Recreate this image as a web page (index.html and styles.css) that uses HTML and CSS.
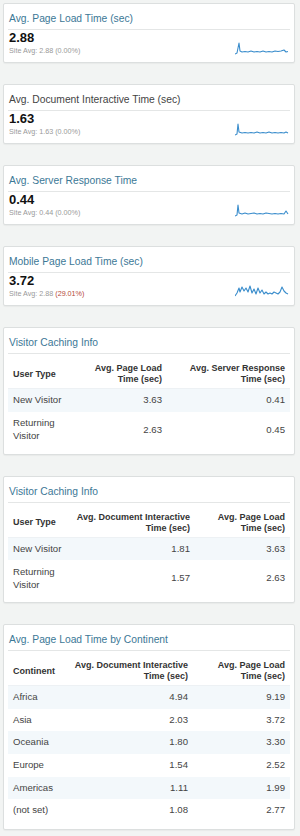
FILE: index.html
```html
<!doctype html>
<html>
<head>
    <meta charset="UTF-8">
    <title>Site Speed</title>
    <link rel="stylesheet" href="styles.css">
</head>
<body>
<div class="page">
    <div class="card small">
        <div class="title">Avg. Page Load Time (sec)</div>
        <div class="metric">
            <div>
                <div class="value">2.88</div>
                <div class="siteAvg">Site Avg: 2.88 (0.00%)</div>
            </div>
            <svg class="spark" viewBox="0 0 54 14" width="54" height="14">
                <polyline points="0,13 2,12 4,2 5,10 7,11 10,10.5 13,11 16,10 19,11 22,10.5 25,11 28,10 31,11 34,10.5 37,11 40,10 43,10.5 46,10 49,9 51,11 53,10.5"/>
            </svg>
        </div>
    </div>

    <div class="card small">
        <div class="title dark">Avg. Document Interactive Time (sec)</div>
        <div class="metric">
            <div>
                <div class="value">1.63</div>
                <div class="siteAvg">Site Avg: 1.63 (0.00%)</div>
            </div>
            <svg class="spark" viewBox="0 0 54 14" width="54" height="14">
                <polyline points="0,13 2,12 3,2 4,10 7,11 10,10.5 13,11 16,10.5 19,11 22,10 25,11 28,10.5 31,11 34,10 37,11 40,10.5 43,11 46,10.5 49,11 51,10 53,11"/>
            </svg>
        </div>
    </div>

    <div class="card small">
        <div class="title">Avg. Server Response Time</div>
        <div class="metric">
            <div>
                <div class="value">0.44</div>
                <div class="siteAvg">Site Avg: 0.44 (0.00%)</div>
            </div>
            <svg class="spark" viewBox="0 0 54 14" width="54" height="14">
                <polyline points="0,13 2,12 3,2 4,10 7,11 10,10 13,11 16,10.5 19,10 22,11 25,10.5 28,11 31,10 34,10.5 37,11 40,10.5 43,11 46,10.5 49,11 51,8 53,11"/>
            </svg>
        </div>
    </div>

    <div class="card small">
        <div class="title">Mobile Page Load Time (sec)</div>
        <div class="metric">
            <div>
                <div class="value">3.72</div>
                <div class="siteAvg">Site Avg: 2.88 <span class="bad">(29.01%)</span></div>
            </div>
            <svg class="spark" viewBox="0 0 54 14" width="54" height="14">
                <polyline points="0,12 2,9 4,4 5,8 7,3 9,7 11,4 13,8 15,2 17,9 19,5 21,10 23,4 25,9 27,6 29,10 31,8 33,10 35,9 37,10 39,8 41,9 43,10 45,8 47,3 49,7 51,9 53,10"/>
            </svg>
        </div>
    </div>

    <div class="card">
        <div class="title">Visitor Caching Info</div>
        <table class="data caching1">
            <colgroup><col class="c1"><col class="c2"><col></colgroup>
            <thead>
            <tr><th>User Type</th><th class="num">Avg. Page Load Time (sec)</th><th class="num">Avg. Server Response Time (sec)</th></tr>
            </thead>
            <tbody>
            <tr><td>New Visitor</td><td class="num">3.63</td><td class="num">0.41</td></tr>
            <tr class="tall"><td>Returning Visitor</td><td class="num">2.63</td><td class="num">0.45</td></tr>
            </tbody>
        </table>
    </div>

    <div class="card">
        <div class="title">Visitor Caching Info</div>
        <table class="data caching2">
            <colgroup><col class="c1"><col class="c2"><col></colgroup>
            <thead>
            <tr><th>User Type</th><th class="num">Avg. Document Interactive Time (sec)</th><th class="num">Avg. Page Load Time (sec)</th></tr>
            </thead>
            <tbody>
            <tr><td>New Visitor</td><td class="num">1.81</td><td class="num">3.63</td></tr>
            <tr class="tall"><td>Returning Visitor</td><td class="num">1.57</td><td class="num">2.63</td></tr>
            </tbody>
        </table>
    </div>

    <div class="card">
        <div class="title">Avg. Page Load Time by Continent</div>
        <table class="data continent">
            <colgroup><col class="c1"><col class="c2"><col></colgroup>
            <thead>
            <tr><th>Continent</th><th class="num">Avg. Document Interactive Time (sec)</th><th class="num">Avg. Page Load Time (sec)</th></tr>
            </thead>
            <tbody>
            <tr><td>Africa</td><td class="num">4.94</td><td class="num">9.19</td></tr>
            <tr><td>Asia</td><td class="num">2.03</td><td class="num">3.72</td></tr>
            <tr><td>Oceania</td><td class="num">1.80</td><td class="num">3.30</td></tr>
            <tr><td>Europe</td><td class="num">1.54</td><td class="num">2.52</td></tr>
            <tr><td>Americas</td><td class="num">1.11</td><td class="num">1.99</td></tr>
            <tr><td>(not set)</td><td class="num">1.08</td><td class="num">2.77</td></tr>
            </tbody>
        </table>
    </div>
</div>
</body>
</html>
```

FILE: styles.css
```css
body {
    margin: 0;
    background: #f2f4f3;
    font-family: "Liberation Sans", Arial, sans-serif;
    color: #333;
}

.page {
    padding: 3px 5px 0 3px;
}

.card {
    background: #fff;
    border: 1px solid #dcdfdf;
    border-radius: 2px;
    box-shadow: 0 1px 1px rgba(0, 0, 0, 0.04);
    margin-bottom: 21px;
    padding: 0 4px 7px 4px;
}

.card.small {
    box-sizing: border-box;
    height: 60px;
    padding-bottom: 0;
}

.title {
    font-size: 10.3px;
    color: #3c7896;
    line-height: 13px;
    padding: 8px 0 4px 1px;
    border-bottom: 1px solid #e4e6e6;
}

.title.dark {
    color: #444;
}

.metric {
    display: flex;
    justify-content: space-between;
    align-items: flex-end;
    padding-left: 1px;
}

.value {
    font-size: 13px;
    font-weight: bold;
    color: #111;
    line-height: 16px;
}

.siteAvg {
    font-size: 7.2px;
    color: #999;
    line-height: 10px;
}

.siteAvg .bad {
    color: #b5483a;
}

.spark {
    margin: 0 1px 1px 0;
}

.spark polyline {
    fill: none;
    stroke: #3a8dcc;
    stroke-width: 1.1;
    stroke-linejoin: round;
}

.data {
    width: 100%;
    border-collapse: collapse;
    table-layout: fixed;
    font-size: 9px;
}

.data th {
    font-weight: bold;
    color: #333;
    line-height: 11px;
    padding: 9px 5px 3px 5px;
    border-bottom: 1px solid #edf1f4;
    text-align: left;
}

.data td {
    font-size: 9.6px;
    padding: 5px;
    line-height: 12.6px;
    color: #444;
}

.data .num {
    text-align: right;
}

.data tbody tr:nth-child(odd) {
    background: #f3f8fb;
}

.data tr.tall td {
    line-height: 13px;
    padding-top: 4.5px;
    padding-bottom: 4.5px;
}

.caching1 .c1 { width: 70px; }
.caching1 .c2 { width: 89px; }

.caching2 .c1 { width: 62px; }
.caching2 .c2 { width: 125px; }

.continent .c1 { width: 56px; }
.continent .c2 { width: 129px; }
```
